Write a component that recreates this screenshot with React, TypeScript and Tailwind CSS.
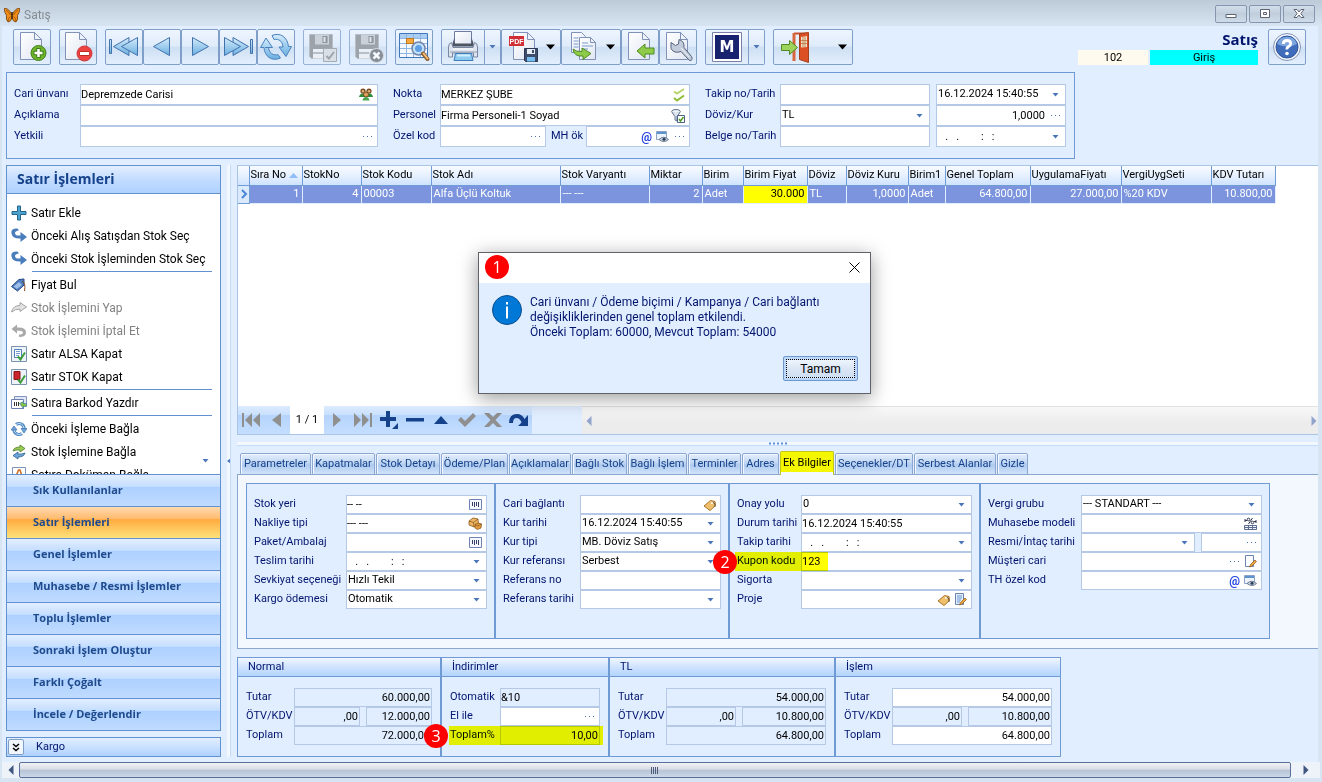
import type { ReactNode } from 'react';
import clsx from 'clsx';

const toolBtn =
  'flex h-9 items-center justify-center rounded-[2px] border border-[#7f9fc9] bg-[linear-gradient(#eef5fe_0%,#dfebfa_48%,#cddff3_50%,#e3effd_100%)]';

/* ---------- small glyphs ---------- */

const Down = ({ dark = false }: { dark?: boolean }) => (
  <svg width="9" height="6" viewBox="0 0 9 6" className="shrink-0">
    <path d={dark ? 'M0 0.5h9L4.5 5.5z' : 'M1.5 1h6L4.5 4.5z'} fill={dark ? '#000' : '#4a76b8'} />
  </svg>
);

const Dots = () => (
  <svg width="9" height="4" viewBox="0 0 9 4">
    <path d="M0 1h1v1H0zM4 1h1v1H4zM8 1h1v1H8z" fill="#4a6fae" />
  </svg>
);

const At = () => <span className="text-[12px] leading-3 font-bold text-[#2142e0]">@</span>;

const Eye = () => (
  <svg width="13" height="12" viewBox="0 0 13 12">
    <path d="M.5.5h10v8H.5z" fill="#eef4fb" stroke="#8aa3c4" />
    <path d="M1 1h9v2H1z" fill="#5d92cf" />
    <path d="M3 8.5Q7.5 4 12.5 8.5 8 12.5 3 8.500z" fill="#c8d2df" stroke="#6b7d97" />
    <circle cx="8" cy="8.300" r="1.500" fill="#2d3d57" />
  </svg>
);

const People = () => (
  <svg width="14" height="13" viewBox="0 0 14 13">
    <path d="M0 9q1-4 4-3.500Q7 5 7 8q0-3 3-2.500Q13 5 14 9z" fill="#2f8a3a" />
    <circle cx="4" cy="3" r="2.600" fill="#7a4a1c" />
    <circle cx="10" cy="3" r="2.600" fill="#7a4a1c" />
    <circle cx="4" cy="3.300" r="1.300" fill="#e0b07a" />
    <circle cx="10" cy="3.300" r="1.300" fill="#e0b07a" />
    <circle cx="7" cy="6.500" r="2.500" fill="#d9a05c" stroke="#6b3f15" strokeWidth=".8" />
    <path d="M3.500 12.500q.5-3.500 3.500-3.500t3.500 3.500z" fill="#49a64e" />
  </svg>
);

const Checks = () => (
  <svg width="12" height="14" viewBox="0 0 12 14" fill="none" strokeWidth="2">
    <path d="M1 3.500l3 2L11 1" stroke="#b5d56c" />
    <path d="M1 10l3 2.500L11 7.500" stroke="#8dbd3a" />
  </svg>
);

const FilterCheck = () => (
  <svg width="14" height="14" viewBox="0 0 14 14">
    <ellipse cx="5" cy="2.500" rx="4.300" ry="2" fill="#f1f4f9" stroke="#5f7390" />
    <path d="M1 3.500l3 4V11l2 1V7.500l3-4" fill="#dfe5ee" stroke="#5f7390" />
    <path d="M6.500 6.500h7v7h-7z" fill="#fff" stroke="#4d6384" />
    <path d="M8 10l1.500 2L12.500 8" fill="none" stroke="#4f9a20" strokeWidth="1.400" />
  </svg>
);

const Barcode = () => (
  <svg width="13" height="11" viewBox="0 0 13 11">
    <path d="M.5.5h12v10H.5z" fill="#f4f7fd" stroke="#6f83b8" />
    <path d="M3.500 3v4M5.500 3v5M7.500 3v4M9.500 3v5" stroke="#333f66" />
  </svg>
);

const Boxes = () => (
  <svg width="14" height="13" viewBox="0 0 14 13" stroke="#8a5a1c" strokeWidth=".8">
    <path d="M1 4l4-3 5 1 .5 5L6 10 1 8z" fill="#eeb564" />
    <path d="M1 4l4.500 1.500L10 2M5.500 5.500L6 10" fill="none" />
    <path d="M7 7.500l3-1.500 3.500 1-.5 4-3.500 1.500L7 11z" fill="#e39c42" />
    <path d="M7 7.500L10 9l3.500-2" fill="none" />
  </svg>
);

const Tag = () => (
  <svg width="13" height="12" viewBox="0 0 13 12">
    <path d="M7.500 1.500l4.500 1 .5 4-5.500 5L1 7z" fill="#f0bf6c" stroke="#a8752b" />
    <path d="M9 4q3-2 3 4" fill="none" stroke="#5d5242" />
    <circle cx="9" cy="4" r="1" fill="#fff" />
  </svg>
);

const PagePen = ({ lines = false }: { lines?: boolean }) => (
  <svg width="13" height="13" viewBox="0 0 13 13">
    <path d="M1.500.5h8v11h-8z" fill={lines ? '#e2eefb' : '#fbfcff'} stroke="#6b83b0" />
    {lines && <path d="M3 3h5M3 5h5M3 7h4M3 9h3" stroke="#6b95cb" />}
    <path d="M5.500 12l1-2.500L11 5l1.500 1.500L8 11z" fill="#eda63f" stroke="#9a6420" strokeWidth=".8" />
  </svg>
);

const Percent = () => (
  <svg width="13" height="13" viewBox="0 0 13 13" fill="none">
    <path d="M8.500 1l-4 6M1 2v3M12 3v3M1 3.500h2M10 4.500h2" stroke="#2f3850" />
    <circle cx="4.500" cy="2.500" r="1.300" stroke="#2f3850" />
    <circle cx="8.500" cy="5.500" r="1.300" stroke="#2f3850" />
    <path d="M.5 8.500h12v4H.5zM.5 10.500h12M4.500 8.500v4M8.500 8.500v4" stroke="#5d6c8f" fill="#f2f5fb" />
  </svg>
);

/* ---------- toolbar drawings ---------- */

const Icon = ({ children, w = 32 }: { children: ReactNode; w?: number }) => (
  <svg width={w} height="32" viewBox={`0 0 ${w} 32`} className="shrink-0">
    <defs>
      <linearGradient id="blue" x1="0" y1="0" x2="0" y2="1">
        <stop offset="0" stopColor="#d5ecfb" />
        <stop offset="1" stopColor="#69aee0" />
      </linearGradient>
      <linearGradient id="paper" x1="0" y1="0" x2="1" y2="1">
        <stop offset="0" stopColor="#ffffff" />
        <stop offset="1" stopColor="#dfe6f2" />
      </linearGradient>
    </defs>
    {children}
  </svg>
);

const Paper = ({ x = 5 }: { x?: number }) => (
  <g transform={`translate(${x} 0)`}>
    <path d="M.5 1.500h14l7 7v20H.5z" fill="url(#paper)" stroke="#8191b8" />
    <path d="M14.500 1.500v7h7z" fill="#eef3fb" stroke="#8191b8" />
  </g>
);

const NewIcon = () => (
  <Icon>
    <Paper x={4} />
    <circle cx="22.500" cy="22" r="7.500" fill="#6fb52c" stroke="#3f7f18" />
    <path d="M22.500 17v10M17.500 22h10" stroke="#3f7f18" strokeWidth="4.500" />
    <path d="M22.500 18v8M18.500 22h8" stroke="#fff" strokeWidth="2.500" />
  </Icon>
);

const DeleteIcon = () => (
  <Icon>
    <Paper x={3} />
    <circle cx="22.500" cy="22.500" r="7.500" fill="#ef4343" stroke="#c9393a" />
    <path d="M17.500 22.500h10" stroke="#b82a2a" strokeWidth="5" />
    <path d="M18 22.500h9" stroke="#fff" strokeWidth="3" />
  </Icon>
);

const FirstIcon = ({ flip = false }: { flip?: boolean }) => (
  <Icon>
    <g transform={flip ? 'translate(32 0) scale(-1 1)' : undefined} stroke="#4272ab" strokeLinejoin="round">
      <path d="M1.500 8.500h2v14h-2z" fill="url(#blue)" />
      <path d="M21 6.500v18L5.500 15.500z" fill="url(#blue)" />
      <path d="M29.500 6.500v18L13.500 15.500z" fill="url(#blue)" />
    </g>
  </Icon>
);

const PrevIcon = ({ flip = false }: { flip?: boolean }) => (
  <Icon>
    <g transform={flip ? 'translate(32 0) scale(-1 1)' : undefined}>
      <path d="M23.500 6.500v18L7.500 15.500z" fill="url(#blue)" stroke="#4272ab" strokeLinejoin="round" />
    </g>
  </Icon>
);

const RefreshIcon = () => (
  <Icon>
    <g fill="url(#blue)" stroke="#4a82bd" strokeLinejoin="round">
      <path d="M5 16.500h3.500c.5 5.500 5 8.500 9.500 7l2.500 3.500C12 31 4.500 25.500 4 16.500H.5L6 7l6.500 9.500z" />
      <path d="M12 4.500C20 1 27.500 6 28.500 15.500h3L26 25.500l-7-9.500h4c-.5-6-4.500-8.500-9-7.500z" />
    </g>
  </Icon>
);

const SaveIcon = ({ cancel = false }: { cancel?: boolean }) => (
  <Icon>
    <path d="M3.500 3.500h23v24h-21l-2-2z" fill="#858a90" stroke="#a9aeb6" />
    <path d="M9 3.500h14v10H9z" fill="#c3c8ce" />
    <path d="M16.500 5h5v7h-5z" fill="#6f757c" />
    <path d="M17.500 6h2v5h-2z" fill="#e2e5e8" />
    <path d="M7 18h16v9.500H7z" fill="#eef0f2" />
    <path d="M7 22h10" stroke="#a9aeb6" strokeWidth="2" />
    {cancel ? (
      <>
        <circle cx="24.500" cy="24.500" r="7" fill="#686d73" stroke="#d5d8dc" />
        <path d="M21.500 21.500l6 6M27.500 21.500l-6 6" stroke="#fff" strokeWidth="2.500" />
      </>
    ) : (
      <>
        <path d="M17.500 17.500h13v13h-13z" fill="#d7dade" stroke="#8f949a" />
        <path d="M20.500 25l2.500 2.500 5-6.500" fill="none" stroke="#868b92" strokeWidth="2" />
      </>
    )}
  </Icon>
);

const TableSearchIcon = () => (
  <Icon>
    <path d="M1.500 2.500h28v24h-28z" fill="#f4f9ff" stroke="#3f78bd" />
    <path d="M2 3h27v4H2z" fill="#a9cdf3" />
    <path d="M2 7.500h27M2 12.500h27M2 17.500h27M2 22.500h27M8.500 3v23M15.500 3v23M22.500 3v23" stroke="#8fb5e0" />
    <path d="M8.500 7.500h7v5h-7z" fill="#f6a83a" stroke="#c1781c" />
    <circle cx="20.500" cy="17.500" r="6.500" fill="#bfe0fb" fillOpacity=".85" stroke="#7186aa" strokeWidth="1.500" />
    <circle cx="20.500" cy="17.500" r="3.500" fill="#5d9ee4" />
    <path d="M25 22.500l4.500 5.500" stroke="#8b5b2a" strokeWidth="4" strokeLinecap="round" />
    <path d="M25.500 22.500l4 5" stroke="#f3bd7c" strokeWidth="2" strokeLinecap="round" />
  </Icon>
);

const PrintIcon = () => (
  <Icon>
    <path d="M7 12l2-7h14l2 7z" fill="#4d5561" />
    <path d="M7.500 .5h17v13h-17z" fill="url(#paper)" stroke="#6d7b9c" />
    <path d="M4.500 15.500l3-9v6h17v-6l3 9z" fill="#4d5561" />
    <path d="M1.500 16q0-4 3-4.500l1.500 5h20l1.500-5q3 .5 3 4.500v10h-4v-4h-21v4h-4z" fill="#dfe5ee" stroke="#7886a2" />
    <path d="M6 17h20v2H6z" fill="#eef2f7" />
    <path d="M3 21h27" stroke="#8f9bb2" />
    <path d="M8.500 22.500h16l1.500 7H7z" fill="#8ccaf1" stroke="#3f7cb8" />
    <path d="M10 24.500h13" stroke="#d5eefc" strokeWidth="2" />
  </Icon>
);

const Floppy = () => (
  <g transform="translate(16 17)">
    <path d="M.5.5h13v13h-12l-1-1z" fill="#3f4d6d" stroke="#2b3654" />
    <path d="M3 1h8v5H3z" fill="#e8edf5" />
    <path d="M8 2h2v3H8z" fill="#3f4d6d" />
    <path d="M3 9h8v4.500H3z" fill="#76bdf0" />
  </g>
);

const PdfIcon = () => (
  <Icon>
    <Paper x={5} />
    <path d="M1 5h15v10H1z" fill="#cf2f35" />
    <text x="8.500" y="12.500" textAnchor="middle" fontSize="7" fontWeight="700" fontFamily="Liberation Sans, sans-serif" fill="#fff">PDF</text>
    <Floppy />
  </Icon>
);

const CopyIcon = () => (
  <Icon>
    <path d="M3.500 1.500h10l4 4v16h-14z" fill="url(#paper)" stroke="#8191b8" />
    <path d="M5.500 7h5M5.500 10h5M5.500 13h5M5.500 16h5" stroke="#7a9bd0" />
    <path d="M11.500 6.500h11l5 5v17h-16z" fill="url(#paper)" stroke="#8191b8" />
    <path d="M22.500 6.500v5h5" fill="none" stroke="#8191b8" />
    <path d="M14 12h6M14 15h11M14 18h6" stroke="#7a9bd0" />
    <path d="M5 18q3 3 9 2.500V17l9 5.500-8 6V25Q6 26 5 18z" fill="#8ecb48" stroke="#4f8a22" />
  </Icon>
);

const ImportIcon = () => (
  <Icon>
    <Paper x={4} />
    <path d="M13 20l8-7v4h9v6h-9v4z" fill="#8ecb48" stroke="#4f8a22" />
  </Icon>
);

const WrenchIcon = () => (
  <Icon>
    <Paper x={4} />
    <path
      d="M9 11.500l4.500 3 3-1.500.5-4.500q5.500 1.500 5 8l7.500 9q2 4-2 4l-8.500-9Q12 23 9 17.500z"
      fill="#c3ccda"
      stroke="#55627e"
    />
    <path d="M19 17l8 9" stroke="#f1f4f8" />
  </Icon>
);

const MIcon = () => (
  <Icon w={30}>
    <path d="M.5 1.500h29v29H.500z" fill="#fff" stroke="#7a80a8" />
    <path d="M3 4h24v24H3z" fill="#19226f" />
    <text x="15" y="21" textAnchor="middle" fontSize="15" fontWeight="900" fontFamily="DejaVu Sans, sans-serif" fill="#fff">M</text>
  </Icon>
);

const ExitIcon = () => (
  <Icon>
    <path d="M14 2.500h14" stroke="#c8502a" strokeWidth="2" />
    <path d="M14 2v28" stroke="#d9663c" strokeWidth="3" />
    <path d="M19.500 3l9-1.500v30l-9-3z" fill="#dc4f25" stroke="#a6401f" />
    <path d="M21 6l6-1v11l-6 .5z" fill="#f2dfc8" />
    <path d="M23 6v10M25 5.500v10.500M21 9.500h6M21 12.500h6" stroke="#b7773f" strokeWidth=".8" />
    <path d="M1.500 13.500h8v-4l8 7-8 7v-4h-8z" fill="#9dd35a" stroke="#4f8a22" />
  </Icon>
);

const HelpIcon = () => (
  <Icon>
    <circle cx="16" cy="16" r="13.500" fill="#f4f7fc" stroke="#8293b8" />
    <circle cx="16" cy="16" r="11" fill="#3f6cbb" stroke="#2f559c" />
    <path d="M6 13a10.500 10.500 0 0 1 20 0q-10 5-20 0z" fill="#7ea6de" />
    <path d="M12.300 13q0-3.500 3.700-3.500t3.700 3q0 2-2 3t-1.700 3" fill="none" stroke="#fff" strokeWidth="2.800" />
    <circle cx="16" cy="22.500" r="1.800" fill="#fff" />
  </Icon>
);

const Butterfly = () => (
  <svg width="16" height="15" viewBox="0 0 16 15">
    <path d="M0 0q5 0 8 7 3-7 8-7-.5 5-2.500 7.500 1 4-1.500 6.500Q9 14 8 9.500 7 14 4 14 1.500 11.500 2.500 7.500.5 5 0 0z" fill="#ef8c16" stroke="#5c3208" strokeWidth=".7" />
    <path d="M2 2q3 2 4.500 5M14 2q-3 2-4.500 5M4 13q0-3 2.500-4.500M12 13q0-3-2.500-4.500" fill="none" stroke="#8a4a0c" strokeWidth=".7" />
    <path d="M8 4v7" stroke="#3a2208" strokeWidth="1.500" />
  </svg>
);

/* ---------- form parts ---------- */

type FieldProps = {
  id: string;
  label?: string;
  labelWidth?: string;
  value?: string;
  kind?: 'text' | 'select';
  right?: boolean;
  readOnly?: boolean;
  tall?: boolean;
  width?: string;
  icons?: ReactNode;
};

const Field = ({ id, label, labelWidth = '', value = '', kind = 'text', right, readOnly, tall, width = 'flex-1', icons }: FieldProps) => (
  <>
    {label && (
      <label htmlFor={id} className={clsx('shrink-0 whitespace-nowrap text-[#00146e]', labelWidth)}>
        {label}
      </label>
    )}
    <div
      className={clsx(
        'flex min-w-0 items-center gap-1 border border-[#b5c9e6]',
        icons ? 'pr-1' : 'pr-px',
        tall ? 'h-[21px]' : 'h-[19px]',
        width,
        readOnly ? 'bg-[#e1eeff]' : 'bg-white',
      )}
    >
      {kind === 'select' ? (
        <select id={id} aria-label={label ?? id} defaultValue={value} className="h-full min-w-0 flex-1 appearance-none bg-transparent pl-px text-black outline-none">
          <option value={value}>{value}</option>
        </select>
      ) : (
        <input
          id={id}
          aria-label={label ?? id}
          defaultValue={value}
          readOnly={readOnly}
          className={clsx('h-full w-0 min-w-0 flex-1 bg-transparent text-black outline-none', right && 'text-right')}
        />
      )}
      {icons}
    </div>
  </>
);

const Row = ({ children }: { children: ReactNode }) => <div className="relative flex items-center">{children}</div>;

const Badge = ({ n, className }: { n: number; className: string }) => (
  <span className={clsx('absolute z-10 flex size-6 items-center justify-center rounded-full bg-[#fe0000] font-["Open_Sans",sans-serif] text-[16px] text-white', className)}>
    {n}
  </span>
);

const arrow = (
  <span className="flex w-3 justify-center">
    <Down />
  </span>
);
const dots = (
  <span className="flex w-3 justify-center">
    <Dots />
  </span>
);
const emptyDate = '   .   .        :   :';

/* ---------- sections ---------- */

const TitleBar = () => (
  <header className="flex h-[26px] items-center justify-between bg-[linear-gradient(#bdcbd9,#d7e4f1)] pr-[7px] pl-1">
    <div className="flex items-center gap-1 pt-1 text-[12px] text-[#858b92]">
      <Butterfly />
      <span>Satış</span>
    </div>
    <div className="flex gap-0.5 pt-0.5">
      {['Küçült', 'Geri yükle', 'Kapat'].map((name, i) => (
        <button
          key={name}
          aria-label={name}
          className="flex h-[18px] w-8 items-center justify-center rounded-[2px] border border-[#8796b0] bg-[linear-gradient(#d3deea,#c0cedc_50%,#cfdbe8)]"
        >
          <svg width="12" height="10" viewBox="0 0 12 10" fill="#fff" stroke="#5c6373">
            {i === 0 && <path d="M1 5.500h10v3H1z" />}
            {i === 1 && <path d="M1.500.5h9v8h-9zM4.500 3.500h3v2h-3z" />}
            {i === 2 && <path d="M1 .5h3l2 2.500L8 .5h3L7.800 4.500 11 8.500H8L6 6 4 8.500H1l3.200-4z" />}
          </svg>
        </button>
      ))}
    </div>
  </header>
);

const ToolButton = ({ label, children, faded }: { label: string; children: ReactNode; faded?: boolean }) => (
  <button aria-label={label} disabled={faded} className={clsx(toolBtn, 'w-[38px]', faded && 'opacity-75')}>
    {children}
  </button>
);

const SplitButton = ({ label, children }: { label: string; children: ReactNode }) => (
  <div className="flex">
    <button aria-label={label} className={clsx(toolBtn, 'w-11 rounded-r-none')}>
      {children}
    </button>
    <button aria-label={`${label} seçenekleri`} className={clsx(toolBtn, 'w-4 rounded-l-none border-l-0')}>
      <Down />
    </button>
  </div>
);

const MenuButton = ({ label, width, children }: { label: string; width: string; children: ReactNode }) => (
  <button aria-label={label} className={clsx(toolBtn, width, 'justify-between! pr-[5px] pl-1.5')}>
    {children}
    <Down dark />
  </button>
);

const Toolbar = () => (
  <div className="flex h-[46px] items-start pt-[3px] pr-3 pl-[11px]">
    <div className="flex gap-2">
      <ToolButton label="Yeni"><NewIcon /></ToolButton>
      <ToolButton label="Sil"><DeleteIcon /></ToolButton>
      <div className="flex">
        <ToolButton label="İlk"><FirstIcon /></ToolButton>
        <ToolButton label="Önceki"><PrevIcon /></ToolButton>
        <ToolButton label="Sonraki"><PrevIcon flip /></ToolButton>
        <ToolButton label="Son"><FirstIcon flip /></ToolButton>
        <ToolButton label="Yenile"><RefreshIcon /></ToolButton>
      </div>
      <ToolButton label="Kaydet" faded><SaveIcon /></ToolButton>
      <ToolButton label="Vazgeç" faded><SaveIcon cancel /></ToolButton>
      <ToolButton label="Listele"><TableSearchIcon /></ToolButton>
      <div className="flex">
        <SplitButton label="Yazdır"><PrintIcon /></SplitButton>
        <MenuButton label="PDF kaydet" width="w-[60px]"><PdfIcon /></MenuButton>
        <MenuButton label="Kopyala" width="w-[60px]"><CopyIcon /></MenuButton>
        <ToolButton label="Aktar"><ImportIcon /></ToolButton>
        <ToolButton label="Ayarlar"><WrenchIcon /></ToolButton>
      </div>
      <SplitButton label="M"><MIcon /></SplitButton>
      <MenuButton label="Çıkış" width="w-20"><ExitIcon /></MenuButton>
    </div>
    <div className="ml-auto flex gap-2.5">
      <div className="w-[180px]">
        <div className='h-[21px] text-right font-["Open_Sans",sans-serif] text-[15px] leading-[21px] font-bold text-[#00146e]'>Satış</div>
        <div className="flex gap-0.5 text-center leading-[15px] text-black">
          <div className="w-[70px] bg-[#fffaee]">102</div>
          <div className="flex-1 bg-[#00ffff]">Giriş</div>
        </div>
      </div>
      <ToolButton label="Yardım"><HelpIcon /></ToolButton>
    </div>
  </div>
);

const HeaderForm = () => (
  <section className="ml-1 flex h-[87px] w-[1069px] gap-[15px] border border-[#6f9ad3] px-[7px] pt-[11px]">
    <div className="w-[364px]">
      <Row><Field tall id="cari" label="Cari ünvanı" labelWidth="w-[66px]" value="Depremzede Carisi" icons={<People />} /></Row>
      <Row><Field tall id="aciklama" label="Açıklama" labelWidth="w-[66px]" /></Row>
      <Row><Field tall id="yetkili" label="Yetkili" labelWidth="w-[66px]" icons={dots} /></Row>
    </div>
    <div className="w-[297px]">
      <Row><Field tall id="nokta" label="Nokta" labelWidth="w-[47px]" value="MERKEZ ŞUBE" icons={<Checks />} /></Row>
      <Row><Field tall id="personel" label="Personel" labelWidth="w-[47px]" value="Firma Personeli-1 Soyad" icons={<FilterCheck />} /></Row>
      <Row>
        <Field tall id="ozelkod" label="Özel kod" labelWidth="w-[47px]" icons={dots} />
        <Field tall id="mhok" label="MH ök" labelWidth="ml-[5px] w-[35px]" width="w-[104px]" icons={<><At /><Eye />{dots}</>} />
      </Row>
    </div>
    <div className="w-[361px]">
      <Row>
        <Field tall id="takip" label="Takip no/Tarih" labelWidth="w-[75px]" width="mr-1.5 w-[150px]" />
        <Field tall id="takip-tarihi" kind="select" value="16.12.2024 15:40:55" icons={arrow} />
      </Row>
      <Row>
        <Field tall id="doviz" label="Döviz/Kur" labelWidth="w-[75px]" width="mr-1.5 w-[150px]" kind="select" value="TL" icons={arrow} />
        <Field tall id="kur" right value="1,0000" icons={dots} />
      </Row>
      <Row>
        <Field tall id="belge" label="Belge no/Tarih" labelWidth="w-[75px]" width="mr-1.5 w-[150px]" />
        <Field tall id="belge-tarihi" value={emptyDate} icons={arrow} />
      </Row>
    </div>
  </section>
);

type Action = { text: string; icon: ReactNode; disabled?: boolean; divider?: boolean };

const turn = (
  <path d="M6.500.5Q-.5 0 .5 5.500 1.500 11 9.500 10.500V14L16 9l-6.500-5v3.500Q4 8 4 5q0-2 4-2.500z" fill="#4a7dbc" />
);

const actions: Action[] = [
  { text: 'Satır Ekle', icon: <path d="M6.500 1h3v5.500H15v3H9.500V15h-3V9.500H1v-3h5.500z" fill="#4fa3cb" stroke="#1f6590" /> },
  { text: 'Önceki Alış Satışdan Stok Seç', icon: turn },
  { text: 'Önceki Stok İşleminden Stok Seç', icon: turn, divider: true },
  {
    text: 'Fiyat Bul',
    icon: (
      <>
        <path d="M8 2.500L13 2v6L6.500 14 .5 9.500z" fill="#4c7fc2" stroke="#24497f" />
        <path d="M2.500 9.500L8 5l3 3-5 4z" fill="#9dbfe8" />
        <path d="M11 4q4 2 2.500 10" fill="none" stroke="#8a4c20" />
      </>
    ),
  },
  { text: 'Stok İşlemini Yap', disabled: true, icon: <path d="M.5 12Q2 5.500 9 5.500V2.500L15.500 7 9 11.500V9Q4 9 .5 12z" fill="#e3e3e3" stroke="#a4a4a4" /> },
  { text: 'Stok İşlemini İptal Et', disabled: true, icon: <path d="M.5 6L6 1.500v3Q15 4 15 9.500 15 14 8 14v-2.500q4 0 4-2 0-2-6-2v3z" fill="#a9a9a9" /> },
  {
    text: 'Satır ALSA Kapat',
    icon: (
      <>
        <path d="M.5.5h15v15H.500z" fill="#eef3f9" stroke="#7b93ae" />
        <path d="M3.500 3.500h7v8h-7z" fill="#fff" stroke="#4d7fbd" />
        <path d="M5 5.500h4M5 7.500h4M5 9.500h3" stroke="#6f9bd0" />
        <path d="M7 10.500l2.500 3L14 6.500" fill="none" stroke="#3e9e3a" strokeWidth="2" />
      </>
    ),
  },
  {
    text: 'Satır STOK Kapat',
    divider: true,
    icon: (
      <>
        <path d="M.5.5h15v15H.500z" fill="#eef3f9" stroke="#7b93ae" />
        <path d="M3 2.500h6v8H3z" fill="#c9252c" stroke="#8a1419" />
        <path d="M7 10.500l2.500 3L14 6.500" fill="none" stroke="#3e9e3a" strokeWidth="2" />
      </>
    ),
  },
  {
    text: 'Satıra Barkod Yazdır',
    divider: true,
    icon: (
      <>
        <path d="M3.500 1.500h12v9h-12z" fill="#dfe6f3" stroke="#8292bf" />
        <path d="M.5 4.500h12v9H.500z" fill="#fff" stroke="#6f80b4" />
        <path d="M3.500 7v4M5.500 7v4M7.500 7v4" stroke="#333" />
        <path d="M8.500 8.500l4-2v2h3v3h-3v2z" fill="#86c043" stroke="#3f7fae" strokeWidth=".7" />
      </>
    ),
  },
  {
    text: 'Önceki İşleme Bağla',
    icon: (
      <>
        <path d="M3 8a5 5 0 0 0 8 4.500M13 8A5 5 0 0 0 5 3.500" fill="none" stroke="#4a86c5" strokeWidth="3" />
        <path d="M3 8a5 5 0 0 0 8 4.500M13 8A5 5 0 0 0 5 3.500" fill="none" stroke="#d3e8fa" />
        <path d="M0 9l3-4 3 4zM10 7.500h6L13 12z" fill="#6ea5da" stroke="#3a6ea8" strokeWidth=".7" />
      </>
    ),
  },
  {
    text: 'Stok İşlemine Bağla',
    icon: (
      <>
        <path d="M2 7q1-4 7-4V1l5 3.500L9 8V6Q5 5.500 2 7z" fill="#9acb58" stroke="#4b7d23" strokeWidth=".8" />
        <path d="M14 9q-1 4-7 4v2l-5-3.500L7 8v2q4 .500 7-1z" fill="#6da6d8" stroke="#2d5f92" strokeWidth=".8" />
      </>
    ),
  },
  {
    text: 'Satıra Doküman Bağla',
    icon: (
      <>
        <path d="M1.500.5h13v15h-13z" fill="#fff" stroke="#7b93be" />
        <path d="M4 12L7.500 3h1.500L12 12M5 9h6" fill="none" stroke="#cf6a1e" strokeWidth="1.500" />
      </>
    ),
  },
];

const groups = [
  'Sık Kullanılanlar',
  'Satır İşlemleri',
  'Genel İşlemler',
  'Muhasebe / Resmi İşlemler',
  'Toplu İşlemler',
  'Sonraki İşlem Oluştur',
  'Farklı Çoğalt',
  'İncele / Değerlendir',
];

const Sidebar = () => (
  <aside className="flex w-[215px] shrink-0 flex-col">
    <h2 className='h-7 border border-b-0 border-[#6191ce] bg-[linear-gradient(#e3efff,#c3dcff_50%,#afd2ff)] pl-2.5 font-["Open_Sans",sans-serif] text-[14px] leading-[26px] font-bold text-[#15428b]'>
      Satır İşlemleri
    </h2>
    <div className="relative h-[281px] grow overflow-hidden border border-b-0 border-[#6191ce] bg-white pt-[7px]">
      <ul className="text-[12px]">
        {actions.map((a) => (
          <li key={a.text}>
            <button disabled={a.disabled} className={clsx('flex h-[23px] w-full items-center gap-1 pl-1', a.disabled ? 'text-[#838383]' : 'text-black')}>
              <svg width="16" height="16" viewBox="0 0 16 16">{a.icon}</svg>
              {a.text}
            </button>
            {a.divider && <div className="mt-px mr-2 mb-px ml-[25px] h-px bg-[#6191ce]" />}
          </li>
        ))}
      </ul>
      <span className="absolute right-2.5 bottom-2.5"><Down /></span>
    </div>
    <nav className='border border-b-0 border-[#6191ce] font-["Open_Sans",sans-serif]'>
      {groups.map((g) => (
        <button
          key={g}
          className={clsx(
            'block h-8 w-full border-b border-[#6191ce] pl-[26px] text-left text-[11px] font-bold text-[#1f4a8c]',
            g === 'Satır İşlemleri'
              ? 'bg-[linear-gradient(#ffd9ae,#ffbb6e_38%,#ffab3f_40%,#fee17a)]'
              : 'bg-[linear-gradient(#e3efff,#c4ddff_38%,#add1ff_40%,#c0dbff)]',
          )}
        >
          {g}
        </button>
      ))}
    </nav>
    <div className="mt-1.5 flex h-5 items-center gap-3 border border-[#6191ce] bg-[linear-gradient(#e3efff,#afd2ff)] pl-px text-[#00146e]">
      <button aria-label="Kargo bölümünü aç" className="flex size-4 items-center justify-center rounded-[2px] border border-[#7f9fc9] bg-[#f1f6fd]">
        <svg width="8" height="9" viewBox="0 0 8 9" fill="none" stroke="#000" strokeWidth="1.500">
          <path d="M1 1l3 2.500L7 1M1 5l3 2.500L7 5" />
        </svg>
      </button>
      Kargo
    </div>
  </aside>
);

type Column = { title: string; width: string; value: string; right?: boolean };

const columns: Column[] = [
  { title: 'Sıra No', width: 'w-[53px]', value: '1', right: true },
  { title: 'StokNo', width: 'w-[59px]', value: '4', right: true },
  { title: 'Stok Kodu', width: 'w-[70px]', value: '00003' },
  { title: 'Stok Adı', width: 'w-[129px]', value: 'Alfa Üçlü Koltuk' },
  { title: 'Stok Varyantı', width: 'w-[89px]', value: '--- ---' },
  { title: 'Miktar', width: 'w-[53px]', value: '2', right: true },
  { title: 'Birim', width: 'w-[41px]', value: 'Adet' },
  { title: 'Birim Fiyat', width: 'w-16', value: '30.000', right: true },
  { title: 'Döviz', width: 'w-[39px]', value: 'TL' },
  { title: 'Döviz Kuru', width: 'w-[62px]', value: '1,0000', right: true },
  { title: 'Birim1', width: 'w-[37px]', value: 'Adet' },
  { title: 'Genel Toplam', width: 'w-[85px]', value: '64.800,00', right: true },
  { title: 'UygulamaFiyatı', width: 'w-[91px]', value: '27.000,00', right: true },
  { title: 'VergiUygSeti', width: 'w-[90px]', value: '%20 KDV' },
  { title: 'KDV Tutarı', width: 'w-16', value: '10.800,00', right: true },
];

const navLeft = [
  { name: 'İlk kayıt', path: 'M1 3h2v14H1zM11 3v14L4 10zM19 3v14L12 10z', fill: '#8f8f8f' },
  { name: 'Önceki kayıt', path: 'M14 3v14L5 10z', fill: '#8f8f8f' },
];

const navRight = [
  { name: 'Sonraki kayıt', path: 'M6 3v14L14 10z', fill: '#8f8f8f' },
  { name: 'Son kayıt', path: 'M17 3h2v14h-2zM9 3v14L16 10zM1 3v14L8 10z', fill: '#8f8f8f' },
  { name: 'Ekle', path: 'M7 1h4v6h6v4h-6v6H7v-6H1V7h6zM19 13v6h-6z', fill: '#15428b' },
  { name: 'Çıkar', path: 'M1 8h18v3.500H1z', fill: '#15428b' },
  { name: 'Düzenle', path: 'M10 6l7 8H3z', fill: '#15428b' },
  { name: 'Onayla', path: 'M1 10l3-3 4 4 8-8 3 3L8 17z', fill: '#8f8f8f' },
  { name: 'İptal', path: 'M1 3h5l4 4 4-4h5l-6.500 7L19 17h-5l-4-4-4 4H1l6.500-7z', fill: '#8f8f8f' },
  { name: 'Tazele', path: 'M0 13Q0 4 8 4q5 0 7.500 5L19 5v11H9l3.500-3.500Q11 8 7.500 8 4 8 4 13z', fill: '#15428b' },
];

const NavButton = ({ name, path, fill }: { name: string; path: string; fill: string }) => (
  <button aria-label={name} className="flex w-[26px] justify-center">
    <svg width="20" height="20" viewBox="0 0 20 20">
      <path d={path} fill={fill} />
    </svg>
  </button>
);

const navBg = 'flex items-center bg-[linear-gradient(#dcebfe_0%,#c9e0ff_32%,#b5d4fc_34%,#c4deff_100%)]';

const DataGrid = () => (
  <section className="flex min-h-[270px] grow flex-col border border-r-0 border-[#aac4e6] bg-white">
    <table className="w-[1037px] table-fixed border-collapse leading-4">
      <thead>
        <tr className="h-[19px] bg-[linear-gradient(#f8fbff,#e6f1ff_50%,#cfe3fe)]">
          <th className="w-[11px] border-r border-b border-[#6f9bd6]" aria-label="İşaretçi" />
          {columns.map((c, i) => (
            <th key={c.title} className={clsx(c.width, 'overflow-hidden border-r border-b border-[#6f9bd6] p-0 pl-px text-left font-normal whitespace-nowrap text-black')}>
              {i === 0 ? (
                <span className="flex items-center gap-1">
                  <span className="w-[34px]">{c.title}</span>
                  <svg width="9" height="5" viewBox="0 0 9 5"><path d="M4.500 0L9 5H0z" fill="#8fbdf5" /></svg>
                </span>
              ) : c.title}
            </th>
          ))}
        </tr>
      </thead>
      <tbody>
        <tr className="h-[18px] bg-[#7b94dd] text-white">
          <td className="border-r border-b border-[#6f9bd6] bg-[#dbe9fc] p-0">
            <svg width="10" height="10" viewBox="0 0 10 10" className="ml-px"><path d="M3 1l4 4-4 4" fill="none" stroke="#4a86d8" strokeWidth="2" /></svg>
          </td>
          {columns.map((c) => (
            <td
              key={c.title}
              className={clsx('border-r border-b border-[#e1eeff] px-0.5 py-0', c.right && 'text-right', c.title === 'Birim Fiyat' && 'bg-[#ffff00] text-black')}
            >
              {c.value}
            </td>
          ))}
        </tr>
      </tbody>
    </table>
    <div className="mt-auto flex h-7 bg-[#e1eeff]">
      <div className={navBg}>{navLeft.map((n) => <NavButton key={n.name} {...n} />)}</div>
      <div className="flex w-[34px] items-center justify-center bg-white text-black">1 / 1</div>
      <div className={navBg}>{navRight.map((n) => <NavButton key={n.name} {...n} />)}</div>
      <div className="ml-[50px] flex grow items-center justify-between border-t border-[#e2e2e2] bg-[linear-gradient(#f8f8f8,#ececec_60%)] pr-px pl-1">
        <button aria-label="Sola kaydır"><svg width="6" height="10" viewBox="0 0 6 10"><path d="M5.500 0v10L.500 5z" fill="#8fa3cc" /></svg></button>
        <button aria-label="Sağa kaydır"><svg width="6" height="10" viewBox="0 0 6 10"><path d="M.5 0v10L5.500 5z" fill="#8fa3cc" /></svg></button>
      </div>
    </div>
  </section>
);

const tabs = [
  { name: 'Parametreler', width: 'w-[71px]' },
  { name: 'Kapatmalar', width: 'w-[63px]' },
  { name: 'Stok Detayı', width: 'w-16' },
  { name: 'Ödeme/Plan', width: 'w-[67px]' },
  { name: 'Açıklamalar', width: 'w-[62px]' },
  { name: 'Bağlı Stok', width: 'w-[55px]' },
  { name: 'Bağlı İşlem', width: 'w-[59px]' },
  { name: 'Terminler', width: 'w-[53px]' },
  { name: 'Adres', width: 'w-[37px]' },
  { name: 'Ek Bilgiler', width: 'w-[54px]' },
  { name: 'Seçenekler/DT', width: 'w-[78px]' },
  { name: 'Serbest Alanlar', width: 'w-[82px]' },
  { name: 'Gizle', width: 'w-[31px]' },
];

const Tabs = () => (
  <div role="tablist" className="relative z-[1] -mb-px flex h-6 items-end gap-px pl-[3px]">
    {tabs.map((t) => {
      const active = t.name === 'Ek Bilgiler';
      return (
        <button
          key={t.name}
          role="tab"
          aria-selected={active}
          className={clsx(
            t.width,
            'rounded-t-[2px] border border-[#8ba7cf] text-center whitespace-nowrap',
            active
              ? 'h-6 border-b-0 border-[#c3c41c] bg-[linear-gradient(#f4f700_88%,#f3f8ff_88%)] text-black'
              : 'h-[22px] bg-[linear-gradient(#e3eefc,#c6daf4_40%,#afcbef_55%,#cfe2fb)] text-[#15428b] shadow-[inset_1px_1px_0_#f3f8ff]',
          )}
        >
          {t.name}
        </button>
      );
    })}
  </div>
);

const Box = ({ width, children }: { width: string; children: ReactNode }) => (
  <div className={clsx(width, 'h-[156px] shrink-0 border border-[#6f9ad3] bg-[#e1eeff] px-[7px] pt-[11px]')}>{children}</div>
);

const DetailPanel = () => (
  <section className="flex h-[175px] border border-r-0 border-[#8ba7cf] bg-[#f3f8ff] py-2 pl-2">
    <Box width="w-[249px]">
      <Row><Field id="stokyeri" label="Stok yeri" labelWidth="w-[92px]" value="-- --" icons={<Barcode />} /></Row>
      <Row><Field id="nakliye" label="Nakliye tipi" labelWidth="w-[92px]" value="--- ---" icons={<Boxes />} /></Row>
      <Row><Field id="paket" label="Paket/Ambalaj" labelWidth="w-[92px]" icons={<Barcode />} /></Row>
      <Row><Field id="teslim" label="Teslim tarihi" labelWidth="w-[92px]" value={emptyDate} icons={arrow} /></Row>
      <Row><Field id="sevkiyat" kind="select" label="Sevkiyat seçeneği" labelWidth="w-[92px]" value="Hızlı Tekil" icons={arrow} /></Row>
      <Row><Field id="kargo" kind="select" label="Kargo ödemesi" labelWidth="w-[92px]" value="Otomatik" icons={arrow} /></Row>
    </Box>
    <Box width="w-[234px]">
      <Row><Field id="baglanti" label="Cari bağlantı" labelWidth="w-[77px]" icons={<Tag />} /></Row>
      <Row><Field id="kurtarihi" kind="select" label="Kur tarihi" labelWidth="w-[77px]" value="16.12.2024 15:40:55" icons={arrow} /></Row>
      <Row><Field id="kurtipi" kind="select" label="Kur tipi" labelWidth="w-[77px]" value="MB. Döviz Satış" icons={arrow} /></Row>
      <Row><Field id="kurref" kind="select" label="Kur referansı" labelWidth="w-[77px]" value="Serbest" icons={arrow} /></Row>
      <Row><Field id="refno" label="Referans no" labelWidth="w-[77px]" /></Row>
      <Row><Field id="reftarihi" kind="select" label="Referans tarihi" labelWidth="w-[77px]" icons={arrow} /></Row>
    </Box>
    <Box width="w-[251px]">
      <Row><Field id="onay" kind="select" label="Onay yolu" labelWidth="w-16" value="0" icons={arrow} /></Row>
      <Row><Field id="durum" label="Durum tarihi" labelWidth="w-16" value="16.12.2024 15:40:55" /></Row>
      <Row><Field id="takiptarihi" label="Takip tarihi" labelWidth="w-16" value={emptyDate} icons={arrow} /></Row>
      <Row>
        <Field id="kupon" label="Kupon kodu" labelWidth="w-16" value="123" />
        <span className="pointer-events-none absolute inset-y-0 -left-0.5 w-[93px] bg-[#ffff00] mix-blend-multiply" />
        <Badge n={2} className="-top-0.5 -left-6" />
      </Row>
      <Row><Field id="sigorta" kind="select" label="Sigorta" labelWidth="w-16" icons={arrow} /></Row>
      <Row><Field id="proje" label="Proje" labelWidth="w-16" icons={<><Tag /><PagePen lines /></>} /></Row>
    </Box>
    <Box width="w-[290px]">
      <Row><Field id="vergi" kind="select" label="Vergi grubu" labelWidth="w-[93px]" value="--- STANDART ---" icons={arrow} /></Row>
      <Row><Field id="muhasebe" label="Muhasebe modeli" labelWidth="w-[93px]" icons={<Percent />} /></Row>
      <Row>
        <Field id="resmi" kind="select" label="Resmi/İntaç tarihi" labelWidth="w-[93px]" icons={arrow} />
        <Field id="intac" width="ml-1.5 w-[61px]" icons={dots} />
      </Row>
      <Row><Field id="musteri" label="Müşteri cari" labelWidth="w-[93px]" icons={<>{dots}<PagePen /></>} /></Row>
      <Row><Field id="thozel" label="TH özel kod" labelWidth="w-[93px]" icons={<><At /><Eye /></>} /></Row>
    </Box>
  </section>
);

const Panel = ({ title, width, children }: { title: string; width: string; children: ReactNode }) => (
  <div className={clsx(width, 'h-[100px] shrink-0 border border-[#6f9ad3]')}>
    <h3 className="h-[19px] border-b border-[#6f9ad3] bg-[linear-gradient(#f0f7ff,#cfe3fe_50%,#b3d4ff)] pl-2.5 leading-[18px] text-[#00146e]">{title}</h3>
    <div className="px-2 pt-[11px]">{children}</div>
  </div>
);

type Total = { title: string; width: string; tax: string; amounts: [string, string, string]; editable?: boolean };

const TotalBox = ({ title, width, tax, amounts, editable }: Total) => (
  <Panel title={title} width={width}>
    <Row><Field id={`${title}-tutar`} label="Tutar" labelWidth="w-12" value={amounts[0]} right readOnly={!editable} /></Row>
    <Row>
      <Field id={`${title}-otv`} label="ÖTV/KDV" labelWidth="w-12" value=",00" right readOnly />
      <Field id={`${title}-kdv`} width={tax} value={amounts[1]} right readOnly />
    </Row>
    <Row><Field id={`${title}-toplam`} label="Toplam" labelWidth="w-12" value={amounts[2]} right readOnly={!editable} /></Row>
  </Panel>
);

const Totals = () => (
  <section className="mt-2 flex">
    <TotalBox title="Normal" width="w-[204px]" tax="ml-1.5 w-[66px]" amounts={['60.000,00', '12.000,00', '72.000,00']} />
    <Panel title="İndirimler" width="w-[168px]">
      <Row><Field id="ind-otomatik" label="Otomatik" labelWidth="w-[50px]" value="&10" readOnly /></Row>
      <Row><Field id="ind-el" label="El ile" labelWidth="w-[50px]" icons={dots} /></Row>
      <Row>
        <Field id="ind-toplam" label="Toplam%" labelWidth="w-[50px]" value="10,00" right readOnly />
        <span className="pointer-events-none absolute inset-y-0 -right-[3px] -left-px bg-[#ffff00] mix-blend-multiply" />
        <Badge n={3} className="-top-0.5 -left-[26px]" />
      </Row>
    </Panel>
    <TotalBox title="TL" width="w-[226px]" tax="ml-1.5 w-[84px]" amounts={['54.000,00', '10.800,00', '64.800,00']} />
    <TotalBox title="İşlem" width="w-[226px]" tax="ml-1.5 w-[84px]" amounts={['54.000,00', '10.800,00', '64.800,00']} editable />
  </section>
);

const Dialog = () => (
  <div role="dialog" aria-label="Bilgi" className="absolute top-[87px] left-[241px] z-20 h-[142px] w-[393px] border border-[#5f6368] bg-[#e1eeff] shadow-[0_4px_18px_rgba(0,0,0,0.4)]">
    <div className="relative flex h-[30px] items-center justify-end bg-white pr-2.5 pb-0.5">
      <Badge n={1} className="top-0.5 left-1.5" />
      <button aria-label="Kapat">
        <svg width="11" height="11" viewBox="0 0 11 11"><path d="M.5.500l10 10M10.500.500l-10 10" stroke="#000" /></svg>
      </button>
    </div>
    <div className="flex gap-2 pt-3 pl-[13px]">
      <svg width="30" height="30" viewBox="0 0 30 30">
        <circle cx="15" cy="15" r="14.500" fill="#0078d7" stroke="#0c4f8c" />
        <path d="M14 11.500h2v12h-2zM14 7h2v2.500h-2z" fill="#fff" />
      </svg>
      <p className="text-[12px] leading-[15px] text-[#00146e]">
        Cari ünvanı / Ödeme biçimi / Kampanya / Cari bağlantı<br />
        değişikliklerinden genel toplam etkilendi.<br />
        Önceki Toplam: 60000, Mevcut Toplam: 54000
      </p>
    </div>
    <button className="absolute right-3 bottom-3 h-[25px] w-[75px] rounded-[2px] border border-[#7197c9] bg-[#b9d8fb] p-0.5 text-[12px] text-black">
      <span className="flex h-full items-center justify-center border border-dotted border-black bg-[linear-gradient(#edf4fc,#dce7f5_50%,#cfdef1)]">Tamam</span>
    </button>
  </div>
);

export default function App() {
  return (
    <div className='flex min-h-screen flex-col bg-[#d7e4f2] font-["Roboto","Noto_Sans",sans-serif] text-[11px] text-black'>
      <TitleBar />
      <main className="mr-1 ml-0.5 flex grow flex-col bg-[#e1eeff]">
        <Toolbar />
        <HeaderForm />
        <div className="flex grow pt-1.5 pb-[5px] pl-1">
          <Sidebar />
          <div className="mx-1.5 flex w-1 shrink-0 items-center border-r border-[#c3dcfb] bg-[#f3f8ff]">
            <svg width="4" height="6" viewBox="0 0 4 6"><path d="M4 0v6L0 3z" fill="#4a76b8" /></svg>
          </div>
          <div className="relative flex min-w-0 flex-1 flex-col">
            <DataGrid />
            <div className="flex h-4 shrink-0 flex-col items-center pt-[7px]">
              <div className="flex h-1 w-full justify-center border-b border-[#c3dcfb] bg-[#f3f8ff]">
                <svg width="18" height="3" viewBox="0 0 18 3"><path d="M0 1.500h18" stroke="#5f8fce" strokeWidth="2" strokeDasharray="2 2" /></svg>
              </div>
            </div>
            <Tabs />
            <DetailPanel />
            <Totals />
            <Dialog />
          </div>
        </div>
      </main>
      <div className="mr-0.5 mb-1 ml-0.5 flex h-4 items-center bg-[#eef3f9]">
        <button aria-label="Sola" className="flex w-[17px] justify-center"><svg width="6" height="10" viewBox="0 0 6 10"><path d="M5.500 0v10L.500 5z" fill="#3f5680" /></svg></button>
        <div className="flex h-full grow items-center justify-center rounded-[2px] border border-[#5c6f9b] bg-[linear-gradient(#f1f1f4,#d9dde6_45%,#b6c3d6_50%,#cbd8e7)]">
          <svg width="8" height="7" viewBox="0 0 8 7"><path d="M.5 0v7M2.500 0v7M4.500 0v7M6.500 0v7" stroke="#4d5a78" /></svg>
        </div>
        <button aria-label="Sağa" className="flex w-[29px] justify-center"><svg width="6" height="10" viewBox="0 0 6 10"><path d="M.5 0v10L5.500 5z" fill="#3f5680" /></svg></button>
      </div>
    </div>
  );
}
